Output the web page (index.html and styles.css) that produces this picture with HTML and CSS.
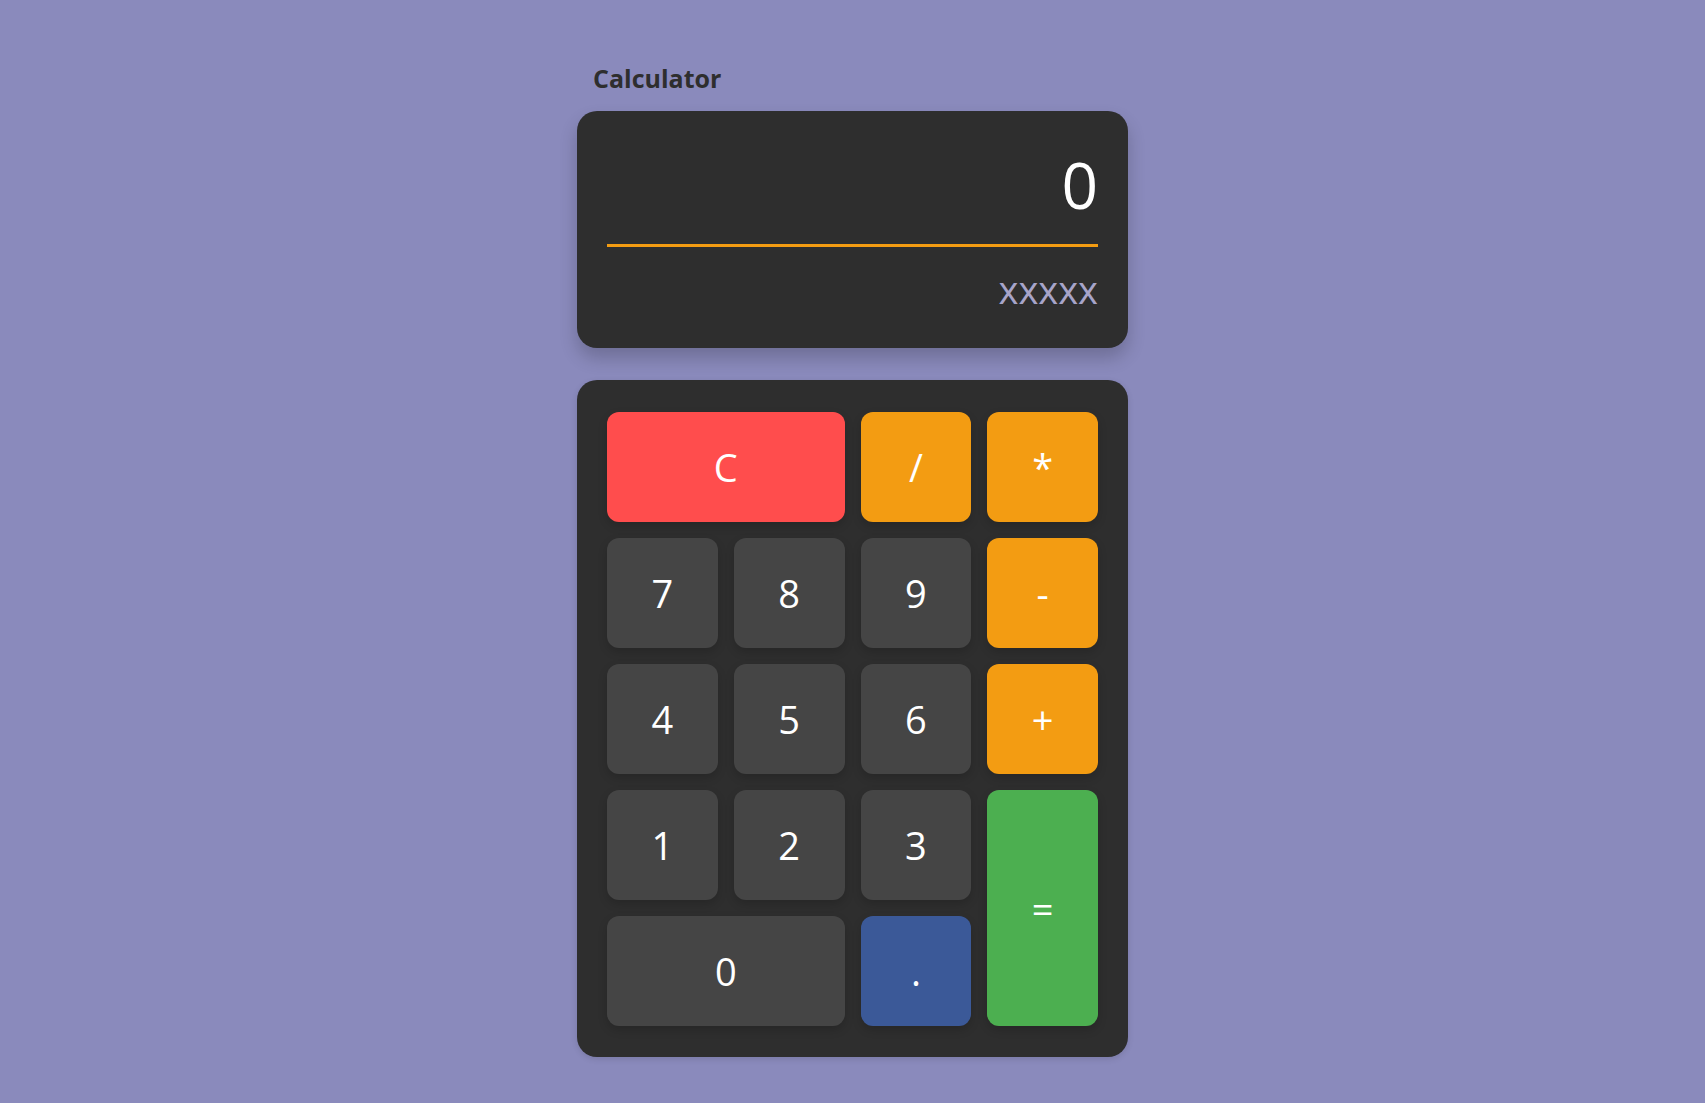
FILE: index.html
```html
<!DOCTYPE html>
<html lang="en">
<head>
<meta charset="utf-8">
<title>Calculator</title>
<link rel="stylesheet" href="styles.css">
</head>
<body>
<main class="app">
  <h1 class="title">Calculator</h1>
  <section class="display">
    <div class="result">0</div>
    <div class="divider"></div>
    <div class="history">xxxxx</div>
  </section>
  <section class="keypad">
    <button class="key key-clear span-2">C</button>
    <button class="key key-op">/</button>
    <button class="key key-op">*</button>
    <button class="key">7</button>
    <button class="key">8</button>
    <button class="key">9</button>
    <button class="key key-op">-</button>
    <button class="key">4</button>
    <button class="key">5</button>
    <button class="key">6</button>
    <button class="key key-op">+</button>
    <button class="key">1</button>
    <button class="key">2</button>
    <button class="key">3</button>
    <button class="key key-equals">=</button>
    <button class="key span-2">0</button>
    <button class="key key-dot">.</button>
  </section>
</main>
</body>
</html>
```

FILE: styles.css
```css
* {
  box-sizing: border-box;
}

html, body {
  margin: 0;
  padding: 0;
}

body {
  background: #8a8abc;
  font-family: "Open Sans", "Noto Sans", sans-serif;
  min-height: 100vh;
}

.app {
  width: 551px;
  margin: 0 auto;
  padding-top: 61px;
}

.title {
  margin: 0 0 16px 0;
  padding-left: 16px;
  font-size: 25px;
  font-weight: 700;
  color: #2e2e2e;
  line-height: normal;
}

.display {
  background: #2e2e2e;
  border-radius: 20px;
  padding: 30px 30px 33px;
  box-shadow: 0 10px 18px rgba(0, 0, 0, 0.2);
}

.result {
  font-size: 64px;
  font-weight: 400;
  line-height: normal;
  color: #ffffff;
  text-align: right;
}

.divider {
  height: 3px;
  background: #f39c12;
  margin: 16px 0;
}

.history {
  font-size: 38px;
  font-weight: 400;
  line-height: normal;
  color: #a7a4c9;
  text-align: right;
}

.keypad {
  margin-top: 32px;
  background: #2e2e2e;
  border-radius: 20px;
  padding: 32px 30px 31px;
  display: grid;
  grid-template-columns: repeat(4, 1fr);
  grid-auto-rows: 110px;
  gap: 16px;
  box-shadow: 0 2px 6px rgba(0, 0, 0, 0.12);
}

.key {
  border: none;
  border-radius: 12px;
  background: #454545;
  color: #ffffff;
  font-family: "Open Sans", "Noto Sans", sans-serif;
  font-size: 38px;
  font-weight: 400;
  line-height: 1;
  padding: 0;
  display: flex;
  align-items: center;
  justify-content: center;
  box-shadow: 0 4px 10px rgba(0, 0, 0, 0.16);
}

.span-2 {
  grid-column: span 2;
}

.key-clear {
  background: #ff4d4d;
}

.key-op {
  background: #f39c12;
}

.key-dot {
  background: #3b5998;
}

.key-equals {
  background: #4caf50;
  grid-column: 4;
  grid-row: 4 / span 2;
}
```
